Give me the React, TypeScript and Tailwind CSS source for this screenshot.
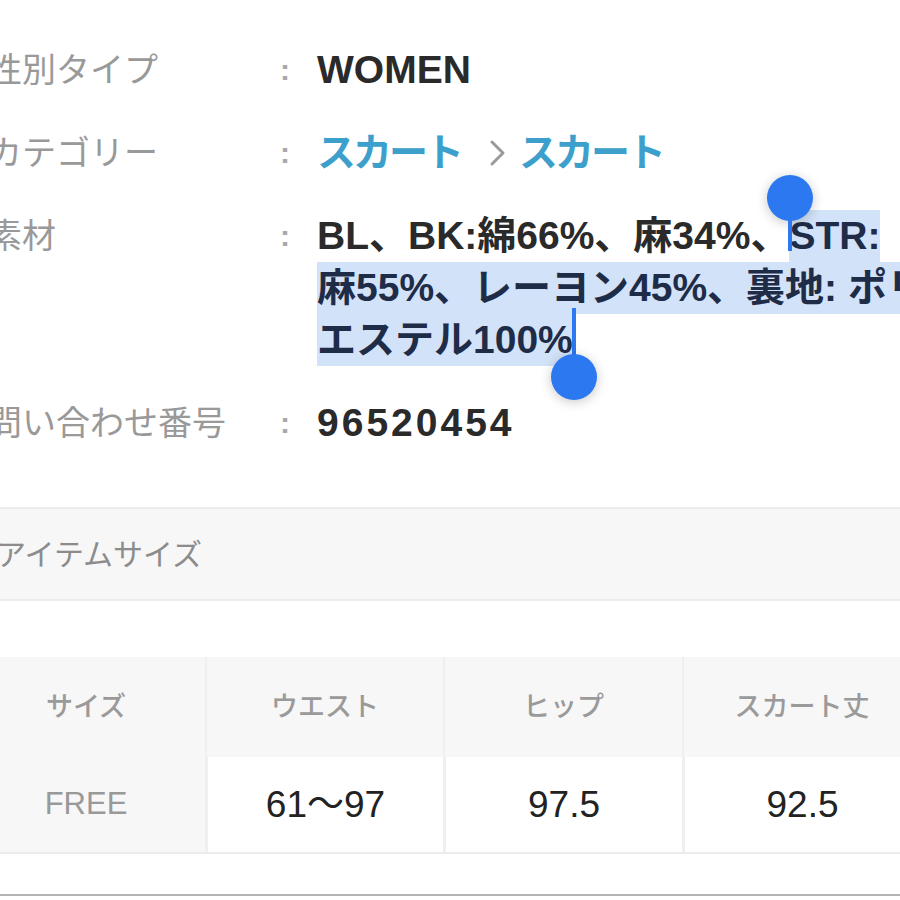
import React from 'react';

const FONT = { fontFamily: '"Liberation Sans", "Noto Sans CJK JP", sans-serif' };

const Handle: React.FC<{ end?: boolean }> = ({ end }) =>
  end ? (
    <span className="absolute right-[-3px] top-[-6px] flex w-[4px] flex-col items-center">
      <span className="h-[48px] w-[4px] bg-[#2b78f0]" />
      <span className="-mt-[2px] h-[46px] w-[46px] shrink-0 rounded-full bg-[#2b78f0] shadow-[0_2px_12px_rgba(0,0,0,0.22)]" />
    </span>
  ) : (
    <span className="absolute left-[-1px] top-[-35px] flex w-[4px] flex-col items-center">
      <span className="h-[46px] w-[46px] shrink-0 rounded-full bg-[#2b78f0] shadow-[0_2px_12px_rgba(0,0,0,0.22)]" />
      <span className="-mt-[10px] h-[40px] w-[4px] bg-[#2b78f0]" />
    </span>
  );

const Sel: React.FC<{ children: React.ReactNode; start?: boolean; end?: boolean }> = ({ children, start, end }) => (
  <span className="relative inline-block h-[52px] bg-[#d2e2f8] align-top text-[#1f2c48]">
    {children}
    {start && <Handle />}
    {end && <Handle end />}
  </span>
);

const Row: React.FC<{ label: string; children: React.ReactNode }> = ({ label, children }) => (
  <div className="flex items-start">
    <div className="-ml-[12px] w-[292px] shrink-0 whitespace-nowrap text-[34px] leading-[52px] text-[#999999]">{label}</div>
    <div className="w-[37px] shrink-0 text-[30px] font-bold leading-[52px] text-[#a8a8a8]">:</div>
    <div className="whitespace-nowrap text-[39px] font-bold leading-[52px] text-[#2a2a2a]">{children}</div>
  </div>
);

const HEAD = ['サイズ', 'ウエスト', 'ヒップ', 'スカート丈'];
const VALUES = ['61～97', '97.5', '92.5'];

export default function App() {
  return (
    <div className="relative h-[900px] w-[900px] overflow-hidden bg-white" style={FONT}>
      <div className="flex flex-col gap-[31px] pt-[44px]">
        <Row label="性別タイプ">WOMEN</Row>
        <Row label="カテゴリー">
          <div className="flex items-center text-[#3d9fcc]">
            <span className="tracking-[-3px]">スカート</span>
            <svg className="ml-[28px] h-[28px] w-[17px]" viewBox="0 0 17 28" fill="none">
              <path d="M3 3 L14 14 L3 25" stroke="#9a9a9a" strokeWidth="3" strokeLinecap="round" strokeLinejoin="round" />
            </svg>
            <span className="ml-[13px] tracking-[-3px]">スカート</span>
          </div>
        </Row>
        <Row label="素材">
          <div className="h-[52px]">
            BL、BK:綿66%、麻34%、<Sel start>STR:</Sel>
          </div>
          <div className="h-[52px]">
            <Sel>麻55%、レーヨン45%、裏地: ポリエ</Sel>
          </div>
          <div className="h-[52px]">
            <Sel end>エステル100%</Sel>
          </div>
        </Row>
        <Row label="問い合わせ番号">
          <span className="tracking-[3px]">96520454</span>
        </Row>
      </div>

      <div className="mt-[58px] flex h-[94px] items-center border-y-2 border-[#ececec] bg-[#f7f7f7]">
        <span className="-ml-[4px] whitespace-nowrap text-[30px] text-[#8c8c8c]">アイテムサイズ</span>
      </div>

      <div className="mt-[56px] -ml-[33px] w-[953px]">
        <div className="grid h-[100px] grid-cols-[238px_238px_239px_238px] bg-[#f7f7f7]">
          {HEAD.map((h, i) => (
            <div
              key={h}
              className={`flex items-center justify-center text-[27px] font-medium text-[#9a9a9a] ${i > 0 ? 'border-l-2 border-[#efefef]' : ''}`}
            >
              {h}
            </div>
          ))}
        </div>
        <div className="grid h-[97px] grid-cols-[238px_238px_239px_238px] border-b-2 border-[#ececec] bg-[#f7f7f7]">
          <div className="flex items-center justify-center text-[31px] text-[#999999]">FREE</div>
          {VALUES.map((v) => (
            <div key={v} className="flex items-center justify-center border-l-[3px] border-[#efefef] bg-white text-[37px] text-[#222222]">
              {v}
            </div>
          ))}
        </div>
      </div>

      <div className="mt-[40px] h-[2px] w-full bg-[#b4b4b4]" />
    </div>
  );
}
